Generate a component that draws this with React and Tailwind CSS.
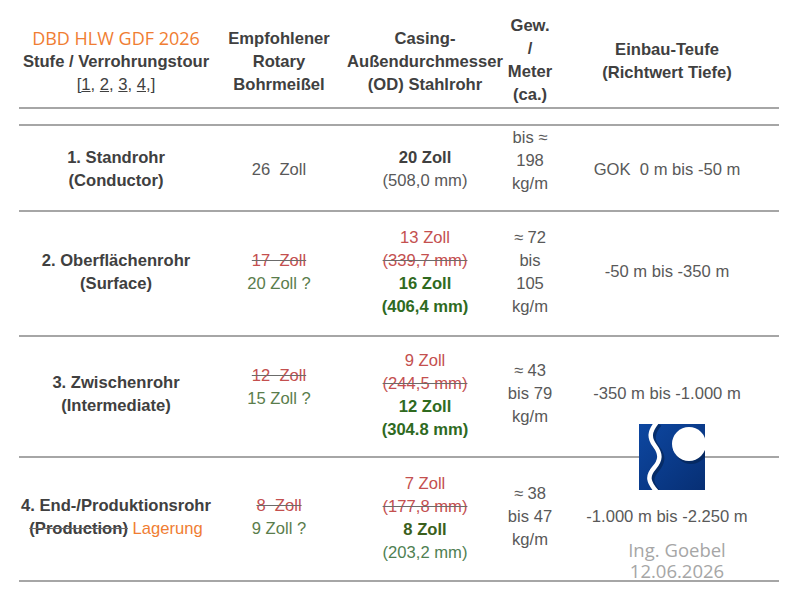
import React from "react";

const red = "text-[#c4504f]";
const strike = "line-through decoration-[#6b6b6b]";
const green = "text-[#5a7d4c]";
const greenBold = "font-bold text-[#2f6a1f]";

const Logo = () => (
  <svg viewBox="0 0 66 66" className="w-[66px] h-[66px]">
    <defs>
      <linearGradient id="bg" x1="0" y1="0" x2="1" y2="1">
        <stop offset="0" stopColor="#0d47a1" />
        <stop offset="1" stopColor="#072f74" />
      </linearGradient>
      <clipPath id="sq">
        <rect width="66" height="66" />
      </clipPath>
    </defs>
    <g clipPath="url(#sq)">
      <rect width="66" height="66" fill="url(#bg)" />
      <path
        d="M18 -2 C 10 8, 10 14, 16 22 S 22 36, 15 44 S 9 58, 18 68"
        fill="none"
        stroke="#03214f"
        strokeWidth="6"
        transform="translate(2 2)"
        opacity="0.6"
      />
      <path
        d="M18 -2 C 10 8, 10 14, 16 22 S 22 36, 15 44 S 9 58, 18 68"
        fill="none"
        stroke="#ffffff"
        strokeWidth="4.5"
      />
      <circle cx="52" cy="23" r="17" fill="#03214f" opacity="0.6" />
      <circle cx="50" cy="20" r="17" fill="#ffffff" />
    </g>
  </svg>
);

const Cell = ({ children, className = "" }) => (
  <div className={`flex flex-col items-center justify-center text-center ${className}`}>
    {children}
  </div>
);

const Row = ({ h, children }) => (
  <div
    className={`grid grid-cols-[194px_132px_160px_50px_224px] border-b-2 border-[#a6a6a6] ${h}`}
  >
    {children}
  </div>
);

export default function App() {
  return (
    <div className="relative w-[792px] h-[600px] bg-white overflow-hidden font-['Liberation_Sans',Arial,sans-serif] text-[16.6px] leading-[23px] text-[#595959]">
      <div className="ml-[19px] w-[760px]">
        {/* Header */}
        <Row h="h-[109px]">
          <Cell className="pt-[16px] font-bold text-[#404040]">
            <span className="font-['Open_Sans',sans-serif] font-normal text-[18px] text-[#f07d32]">
              DBD HLW GDF 2026
            </span>
            <span className="whitespace-nowrap">Stufe / Verrohrungstour</span>
            <span className="font-normal">
              [<span className="underline">1</span>, <span className="underline">2</span>,{" "}
              <span className="underline">3</span>, <span className="underline">4</span>,]
            </span>
          </Cell>
          <Cell className="pt-[16px] font-bold text-[#404040]">
            <span>Empfohlener</span>
            <span>Rotary</span>
            <span>Bohrmeißel</span>
          </Cell>
          <Cell className="pt-[16px] font-bold text-[#404040]">
            <span>Casing-</span>
            <span>Außendurchmesser</span>
            <span>(OD) Stahlrohr</span>
          </Cell>
          <Cell className="pt-[12px] font-bold text-[#404040]">
            <span>Gew.</span>
            <span>/</span>
            <span>Meter</span>
            <span>(ca.)</span>
          </Cell>
          <Cell className="pt-[14px] font-bold text-[#404040]">
            <span>Einbau-Teufe</span>
            <span>(Richtwert Tiefe)</span>
          </Cell>
        </Row>
        <div className="h-[17px] border-b-2 border-[#a6a6a6]" />

        {/* 1. Standrohr */}
        <Row h="h-[86px]">
          <Cell className="pb-[4px] font-bold text-[#404040]">
            <span>1. Standrohr</span>
            <span>(Conductor)</span>
          </Cell>
          <Cell className="pb-[2px]">
            <span className="whitespace-pre">26  Zoll</span>
          </Cell>
          <Cell className="pb-[4px]">
            <span className="font-bold text-[#404040]">20 Zoll</span>
            <span>(508,0 mm)</span>
          </Cell>
          <Cell className="pb-[20px]">
            <span>bis ≈</span>
            <span>198</span>
            <span>kg/m</span>
          </Cell>
          <Cell className="pb-[2px]">
            <span className="whitespace-pre">GOK  0 m bis -50 m</span>
          </Cell>
        </Row>

        {/* 2. Oberflächenrohr */}
        <Row h="h-[125px]">
          <Cell className="pb-[4px] font-bold text-[#404040]">
            <span>2. Oberflächenrohr</span>
            <span>(Surface)</span>
          </Cell>
          <Cell className="pb-[4px]">
            <span className={`whitespace-pre ${red} ${strike}`}>17  Zoll</span>
            <span className={green}>20 Zoll ?</span>
          </Cell>
          <Cell className="pb-[4px]">
            <span className={red}>13 Zoll</span>
            <span className={`${red} ${strike}`}>(339,7 mm)</span>
            <span className={greenBold}>16 Zoll</span>
            <span className={greenBold}>(406,4 mm)</span>
          </Cell>
          <Cell className="pb-[4px]">
            <span>≈ 72</span>
            <span>bis</span>
            <span>105</span>
            <span>kg/m</span>
          </Cell>
          <Cell className="pb-[4px]">
            <span>-50 m bis -350 m</span>
          </Cell>
        </Row>

        {/* 3. Zwischenrohr */}
        <Row h="h-[121px]">
          <Cell className="pb-[6px] font-bold text-[#404040]">
            <span>3. Zwischenrohr</span>
            <span>(Intermediate)</span>
          </Cell>
          <Cell className="pb-[20px]">
            <span className={`whitespace-pre ${red} ${strike}`}>12  Zoll</span>
            <span className={green}>15 Zoll ?</span>
          </Cell>
          <Cell className="pb-[4px]">
            <span className={red}>9 Zoll</span>
            <span className={`${red} ${strike}`}>(244,5 mm)</span>
            <span className={greenBold}>12 Zoll</span>
            <span className={greenBold}>(304.8 mm)</span>
          </Cell>
          <Cell className="pb-[6px]">
            <span>≈ 43</span>
            <span>bis 79</span>
            <span>kg/m</span>
          </Cell>
          <Cell className="pb-[6px]">
            <span>-350 m bis -1.000 m</span>
          </Cell>
        </Row>

        {/* 4. End-/Produktionsrohr */}
        <Row h="h-[124px]">
          <Cell className="pb-[4px] text-[#404040]">
            <span className="font-bold whitespace-nowrap">4. End-/Produktionsrohr</span>
            <span className="whitespace-nowrap">
              <span className={`font-bold ${strike}`}>(Production)</span>{" "}
              <span className="text-[#f07d32]">Lagerung</span>
            </span>
          </Cell>
          <Cell className="pb-[4px]">
            <span className={`whitespace-pre ${red} ${strike}`}>8  Zoll</span>
            <span className={green}>9 Zoll ?</span>
          </Cell>
          <Cell className="pb-[2px]">
            <span className={red}>7 Zoll</span>
            <span className={`${red} ${strike}`}>(177,8 mm)</span>
            <span className="font-bold text-[#3b5f1c]">8 Zoll</span>
            <span className="text-[#4f7f52]">(203,2 mm)</span>
          </Cell>
          <Cell className="pb-[6px]">
            <span>≈ 38</span>
            <span>bis 47</span>
            <span>kg/m</span>
          </Cell>
          <Cell className="pb-[6px]">
            <span>-1.000 m bis -2.250 m</span>
          </Cell>
        </Row>
      </div>

      {/* Logo over the table */}
      <div className="absolute left-[639px] top-[424px]">
        <Logo />
      </div>

      {/* Signature */}
      <div className="absolute left-[612px] top-[539px] w-[130px] text-center font-['Open_Sans',sans-serif] text-[18.5px] leading-[21px] text-[#a6a6a6]">
        <div>Ing. Goebel</div>
        <div>12.06.2026</div>
      </div>
    </div>
  );
}
